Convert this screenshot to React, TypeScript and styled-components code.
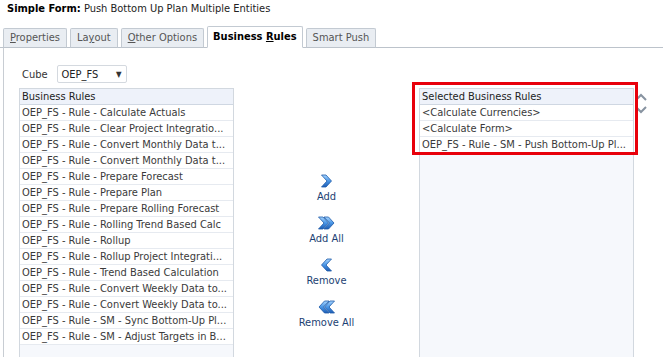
import styled, { createGlobalStyle } from "styled-components";

const GlobalStyle = createGlobalStyle`
	html, body {
		margin: 0;
		padding: 0;
		background: #fff;
	}
	body {
		font-family: "DejaVu Sans Condensed", "Liberation Sans", sans-serif;
		font-size: 11px;
		color: #333;
	}
`;

const Page = styled.div`
	width: 663px;
	height: 357px;
	overflow: hidden;
	display: flex;
	flex-direction: column;
`;

const Title = styled.div`
	height: 18px;
	line-height: 18px;
	padding-left: 7px;
	color: #222;
	b {
		color: #000;
	}
`;

const TabBar = styled.div`
	margin-top: 9px;
	height: 20px;
	display: flex;
	align-items: flex-end;
	gap: 3px;
	padding-left: 3px;
	border-bottom: 1px solid #bcc3cb;
`;

const Tab = styled.div<{ $active?: boolean }>`
	height: ${(p) => (p.$active ? "20px" : "18px")};
	line-height: ${(p) => (p.$active ? "20px" : "18px")};
	padding: 0 ${(p) => (p.$active ? "5px" : "6px")};
	margin-bottom: -1px;
	border: 1px solid #c3cad2;
	border-bottom: ${(p) => (p.$active ? "1px solid #fff" : "1px solid #bcc3cb")};
	border-radius: 2px 2px 0 0;
	background: ${(p) => (p.$active ? "#fff" : "#e9edf2")};
	color: ${(p) => (p.$active ? "#000" : "#555")};
	font-weight: ${(p) => (p.$active ? "bold" : "normal")};
	font-size: 11px;
	u {
		text-decoration-thickness: 1px;
	}
`;

const Content = styled.div`
	flex: 1;
	margin-left: 3px;
	border-left: 1px solid #c8cdd3;
	padding: 17px 0 0 15px;
`;

const CubeRow = styled.div`
	display: flex;
	align-items: center;
	gap: 9px;
	padding-left: 3px;
`;

const Select = styled.div`
	width: 60px;
	height: 16px;
	padding: 0 4px;
	border: 1px solid #d4d9df;
	border-radius: 2px;
	display: flex;
	align-items: center;
	justify-content: space-between;
	color: #222;
	span {
		font-size: 8px;
		color: #333;
	}
`;

const Main = styled.div`
	margin-top: 5px;
	display: flex;
	align-items: flex-start;
`;

const ListBox = styled.div`
	width: 213px;
	height: 280px;
	border: 1px solid #d2d8df;
	background: #f6f8fc;
`;

const ListHeader = styled.div`
	height: 15px;
	line-height: 15px;
	padding-left: 2px;
	background: #eef2fa;
	border-bottom: 1px solid #cfd7e2;
	color: #222;
`;

const Row = styled.div`
	height: 15px;
	line-height: 15px;
	padding-left: 2px;
	background: #fff;
	border-bottom: 1px solid #e6eaf0;
	white-space: nowrap;
	overflow: hidden;
	color: #3a3a3a;
`;

const Shuttle = styled.div`
	width: 185px;
	padding-top: 86px;
	display: flex;
	flex-direction: column;
	align-items: center;
	gap: 12px;
`;

const ShuttleButton = styled.div`
	display: flex;
	flex-direction: column;
	align-items: center;
	gap: 2px;
	color: #1c3f73;
	line-height: 14px;
	svg {
		display: block;
	}
`;

const RightWrap = styled.div`
	position: relative;
	display: flex;
	align-items: flex-start;
	gap: 1px;
`;

const Highlight = styled.div`
	position: absolute;
	left: -7px;
	top: -6px;
	width: 220px;
	height: 67px;
	border: 3px solid #e8000b;
	pointer-events: none;
`;

const Reorder = styled.div`
	padding-top: 5px;
	display: flex;
	flex-direction: column;
	gap: 5px;
`;

const Arrow = ({ double, left }: { double?: boolean; left?: boolean }) => {
	const w = double ? 17 : 11;
	const shape = (x: number) =>
		`M${x} 1 L${x + 4.5} 1 L${x + 10} 7 L${x + 4.5} 13 L${x} 13 L${x + 5.5} 7 Z`;
	return (
		<svg
			width={w}
			height={14}
			viewBox={`0 0 ${w} 14`}
			style={left ? { transform: "scaleX(-1)" } : undefined}
		>
			<defs>
				<linearGradient id="arrowGrad" x1="0" y1="0" x2="0" y2="1">
					<stop offset="0" stopColor="#a8d6ff" />
					<stop offset="0.5" stopColor="#4a96e6" />
					<stop offset="1" stopColor="#1d5db5" />
				</linearGradient>
			</defs>
			{double && <path d={shape(0.5)} fill="url(#arrowGrad)" stroke="#1e5aa8" strokeWidth="0.8" />}
			<path d={shape(double ? 6 : 0.5)} fill="url(#arrowGrad)" stroke="#1e5aa8" strokeWidth="0.8" />
		</svg>
	);
};

const leftRules = [
	"OEP_FS - Rule - Calculate Actuals",
	"OEP_FS - Rule - Clear Project Integratio...",
	"OEP_FS - Rule - Convert Monthly Data t...",
	"OEP_FS - Rule - Convert Monthly Data t...",
	"OEP_FS - Rule - Prepare Forecast",
	"OEP_FS - Rule - Prepare Plan",
	"OEP_FS - Rule - Prepare Rolling Forecast",
	"OEP_FS - Rule - Rolling Trend Based Calc",
	"OEP_FS - Rule - Rollup",
	"OEP_FS - Rule - Rollup Project Integrati...",
	"OEP_FS - Rule - Trend Based Calculation",
	"OEP_FS - Rule - Convert Weekly Data to...",
	"OEP_FS - Rule - Convert Weekly Data to...",
	"OEP_FS - Rule - SM - Sync Bottom-Up Pl...",
	"OEP_FS - Rule - SM - Adjust Targets in B...",
];

const selectedRules = [
	"<Calculate Currencies>",
	"<Calculate Form>",
	"OEP_FS - Rule - SM - Push Bottom-Up Pl...",
];

export default function App() {
	return (
		<Page>
			<GlobalStyle />
			<Title>
				<b>Simple Form:</b> Push Bottom Up Plan Multiple Entities
			</Title>
			<TabBar>
				<Tab>
					<u>P</u>roperties
				</Tab>
				<Tab>
					La<u>y</u>out
				</Tab>
				<Tab>
					<u>O</u>ther Options
				</Tab>
				<Tab $active>
					Business <u>R</u>ules
				</Tab>
				<Tab>Smart Push</Tab>
			</TabBar>
			<Content>
				<CubeRow>
					Cube
					<Select>
						OEP_FS <span>▼</span>
					</Select>
				</CubeRow>
				<Main>
					<ListBox>
						<ListHeader>Business Rules</ListHeader>
						{leftRules.map((r, i) => (
							<Row key={i}>{r}</Row>
						))}
					</ListBox>
					<Shuttle>
						<ShuttleButton>
							<Arrow />
							Add
						</ShuttleButton>
						<ShuttleButton>
							<Arrow double />
							Add All
						</ShuttleButton>
						<ShuttleButton>
							<Arrow left />
							Remove
						</ShuttleButton>
						<ShuttleButton>
							<Arrow double left />
							Remove All
						</ShuttleButton>
					</Shuttle>
					<RightWrap>
						<ListBox>
							<ListHeader>Selected Business Rules</ListHeader>
							{selectedRules.map((r, i) => (
								<Row key={i}>{r}</Row>
							))}
						</ListBox>
						<Reorder>
							<svg width="12" height="8" viewBox="0 0 12 8">
								<path d="M1 7 L6 2 L11 7" fill="none" stroke="#8793a0" strokeWidth="2" />
							</svg>
							<svg width="12" height="8" viewBox="0 0 12 8">
								<path d="M1 1 L6 6 L11 1" fill="none" stroke="#8793a0" strokeWidth="2" />
							</svg>
						</Reorder>
						<Highlight />
					</RightWrap>
				</Main>
			</Content>
		</Page>
	);
}
